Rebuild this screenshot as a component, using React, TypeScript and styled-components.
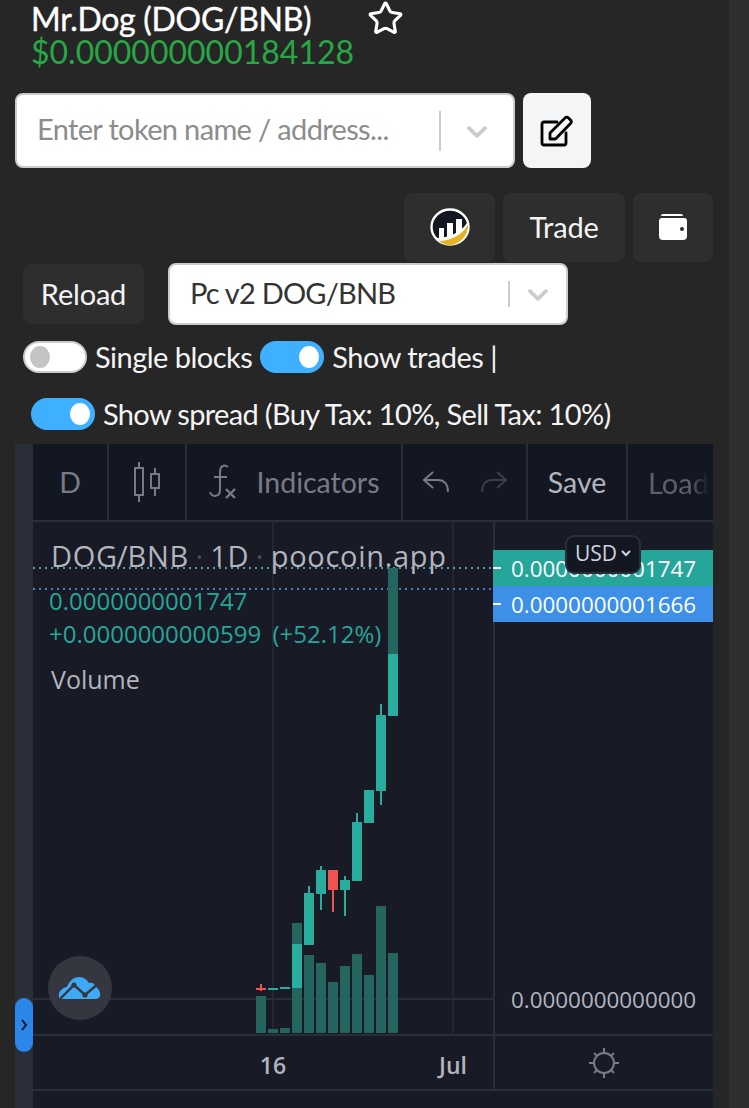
import React from 'react';
import styled, {createGlobalStyle} from 'styled-components';
import {Star} from 'lucide-react';

const GlobalStyle = createGlobalStyle`
    html, body {
        margin: 0;
        padding: 0;
        background: #262626;
    }
`;

const Page = styled.div`
    display: flex;
    width: 749px;
    height: 1108px;
    overflow: hidden;
    font-family: Lato, 'Liberation Sans', sans-serif;
    color: #f4f4f4;
`;

const Main = styled.div`
    width: 729px;
    padding: 0 16px 0 15px;
    box-sizing: border-box;
    display: flex;
    flex-direction: column;
`;

const ScrollTrack = styled.div`
    flex: 1;
    background: #2f2f2f;
`;

const Header = styled.div`
    height: 93px;
    padding-left: 16px;
    box-sizing: border-box;
`;

const TitleRow = styled.div`
    display: flex;
    align-items: center;
    height: 37px;
    gap: 56px;
`;

const Title = styled.div`
    font-size: 32px;
    line-height: 33px;
    font-weight: 400;
    -webkit-text-stroke: 0.4px #fff;
    color: #fff;
    letter-spacing: -0.3px;
`;

const Price = styled.div`
    font-size: 32px;
    line-height: 30px;
    font-weight: 400;
    color: #28a745;
`;

const SearchRow = styled.div`
    display: flex;
    gap: 8px;
    height: 75px;
`;

const SelectBox = styled.div<{$width: number; $height: number}>`
    display: flex;
    align-items: center;
    width: ${(p) => p.$width}px;
    height: ${(p) => p.$height}px;
    box-sizing: border-box;
    background: #fff;
    border: 2px solid #ccc;
    border-radius: 8px;
    padding-left: 20px;
`;

const SelectText = styled.div<{$muted?: boolean}>`
    flex: 1;
    padding-bottom: 4px;
    font-size: 29px;
    letter-spacing: ${(p) => (p.$muted ? -0.65 : -0.8)}px;
    white-space: nowrap;
    color: ${(p) => (p.$muted ? '#8c8c8c' : '#333')};
`;

const SelectDivider = styled.div<{$height: number}>`
    width: 2px;
    height: ${(p) => p.$height}px;
    background: #ccc;
`;

const Chevron = styled.svg<{$gap: number}>`
    width: 34px;
    height: 34px;
    margin: 0 ${(p) => p.$gap}px;
    fill: #ccc;
`;

const EditButton = styled.div`
    display: flex;
    align-items: center;
    justify-content: center;
    width: 68px;
    height: 75px;
    background: #f4f5f7;
    border-radius: 8px;
`;

const ActionRow = styled.div`
    display: flex;
    justify-content: flex-end;
    gap: 8px;
    height: 69px;
    margin-top: 25px;
`;

const DarkButton = styled.div<{$width: number; $height?: number}>`
    display: flex;
    align-items: center;
    justify-content: center;
    width: ${(p) => p.$width}px;
    height: ${(p) => (p.$height ? `${p.$height}px` : 'auto')};
    padding-bottom: 2px;
    box-sizing: border-box;
    background: #2e2e2f;
    border-radius: 8px;
    font-size: 29px;
    letter-spacing: -0.2px;
    color: #f4f4f4;
`;

const ReloadRow = styled.div`
    display: flex;
    align-items: center;
    gap: 24px;
    height: 62px;
    margin-top: 1px;
    padding-left: 8px;
`;

const ToggleRow = styled.div<{$inset: number; $top: number}>`
    display: flex;
    align-items: center;
    gap: 8px;
    height: 33px;
    margin-top: ${(p) => p.$top}px;
    padding-left: ${(p) => p.$inset}px;
`;

const ToggleTrack = styled.div<{$on?: boolean}>`
    display: flex;
    align-items: center;
    justify-content: ${(p) => (p.$on ? 'flex-end' : 'flex-start')};
    width: 64px;
    height: 32px;
    padding: 0 5px;
    box-sizing: border-box;
    border-radius: 16px;
    background: ${(p) => (p.$on ? '#3fb0ff' : '#fff')};
    border: ${(p) => (p.$on ? 'none' : '2px solid #ccc')};
`;

const ToggleKnob = styled.div<{$on?: boolean}>`
    width: 20px;
    height: 22px;
    border-radius: 50%;
    background: ${(p) => (p.$on ? '#fff' : '#c4c4c4')};
`;

const ToggleLabel = styled.div<{$tracking: number}>`
    font-size: 29px;
    letter-spacing: ${(p) => p.$tracking}px;
    white-space: nowrap;
    color: #f4f4f4;
`;

const ChartFrame = styled.div`
    display: flex;
    flex: 1;
    margin-top: 14px;
    background: #131722;
`;

const SideStrip = styled.div`
    position: relative;
    width: 18px;
    background: #2a2e39;
`;

const SideToggle = styled.div`
    position: absolute;
    top: 554px;
    left: 0;
    display: flex;
    align-items: center;
    justify-content: center;
    width: 18px;
    height: 54px;
    border-radius: 9px;
    background: #2a86e8;
`;

const ChartColumn = styled.div`
    flex: 1;
    min-width: 0;
    display: flex;
    flex-direction: column;
`;

const Toolbar = styled.div`
    display: flex;
    height: 78px;
    box-sizing: border-box;
    flex-shrink: 0;
    overflow: hidden;
    border-bottom: 2px solid #2a2e39;
    background: #131722;
`;

const ToolGroup = styled.div<{$width: number; $gap?: number}>`
    display: flex;
    align-items: center;
    justify-content: center;
    gap: ${(p) => p.$gap ?? 20}px;
    flex-shrink: 0;
    width: ${(p) => p.$width}px;
    box-sizing: border-box;
    border-right: 2px solid #2a2e39;
    font-size: 28.5px;
    color: #787b86;
`;

const ToolSave = styled.span`
    color: #b2b5be;
`;

const LoadText = styled.span`
    margin-left: 20px;
    align-self: center;
    white-space: nowrap;
    font-size: 29px;
    color: #5d606b;
    -webkit-mask-image: linear-gradient(to right, #000 70%, transparent 100%);
    mask-image: linear-gradient(to right, #000 70%, transparent 100%);
`;

const PlotArea = styled.div`
    display: flex;
    height: 512px;
    flex-shrink: 0;
    background: #181a25;
`;

const Plot = styled.div`
    position: relative;
    width: 460px;
`;

const ChartCanvas = styled.svg`
    display: block;
`;

const Legend = styled.div`
    position: absolute;
    top: 13px;
    left: 18px;
    font-family: 'Open Sans', sans-serif;
    white-space: nowrap;
`;

const LegendTitle = styled.div`
    font-size: 29px;
    line-height: 42px;
    letter-spacing: 0.7px;
    word-spacing: -9px;
    color: #b2b5be;
`;

const LegendDot = styled.span`
    margin: 0 6.5px;
    color: #4c4f5c;
`;

const LegendValue = styled.div<{$top?: number}>`
    margin-left: -2px;
    margin-top: ${(p) => p.$top ?? 0}px;
    font-size: 24px;
    line-height: 33px;
    word-spacing: 5px;
    color: #26a69a;
`;

const LegendVolume = styled.div`
    margin-top: 12px;
    font-size: 25px;
    line-height: 34px;
    color: #b2b5be;
`;

const PriceAxis = styled.div`
    position: relative;
    flex: 1;
    border-left: 2px solid #2a2e39;
`;

const PriceTag = styled.div<{$bg: string; $top: number}>`
    position: absolute;
    left: -2px;
    right: 0;
    top: ${(p) => p.$top}px;
    height: 36px;
    display: flex;
    align-items: center;
    padding-left: 18px;
    font-family: 'Open Sans', sans-serif;
    font-size: 22.4px;
    color: #fff;
    background: ${(p) => p.$bg};

    &::before {
        content: '';
        position: absolute;
        left: 0;
        top: 17px;
        width: 8px;
        height: 2px;
        background: #fff;
    }
`;

const UsdBadge = styled.div`
    position: absolute;
    top: 13px;
    left: 70px;
    width: 76px;
    height: 39px;
    box-sizing: border-box;
    padding-bottom: 3px;
    display: flex;
    align-items: center;
    justify-content: center;
    gap: 4px;
    border: 2px solid #2a2e39;
    border-radius: 9px;
    background: #131722;
    font-family: 'Open Sans', sans-serif;
    font-size: 21px;
    color: #d1d4dc;
`;

const ZeroLabel = styled.div`
    position: absolute;
    top: 462px;
    left: 16px;
    font-family: 'Open Sans', sans-serif;
    font-size: 22.4px;
    line-height: 32px;
    color: #b2b5be;
    white-space: nowrap;
`;

const TimeRow = styled.div`
    display: flex;
    height: 57px;
    box-sizing: border-box;
    flex-shrink: 0;
    border-top: 2px solid #2a2e39;
    border-bottom: 2px solid #2a2e39;
    background: #181a25;
`;

const TimeAxis = styled.div`
    position: relative;
    width: 460px;
`;

const TimeLabel = styled.div<{$x: number}>`
    position: absolute;
    top: 13px;
    left: ${(p) => p.$x}px;
    transform: translateX(-50%);
    font-family: 'Open Sans', sans-serif;
    font-size: 23px;
    font-weight: 600;
    color: #b2b5be;
`;

const SunCell = styled.div`
    flex: 1;
    display: flex;
    align-items: center;
    justify-content: center;
    border-left: 2px solid #2a2e39;
`;

const BottomBand = styled.div`
    flex: 1;
    background: #181a25;
`;

const LogoBubble = styled.div`
    position: absolute;
    top: 434px;
    left: 15px;
    width: 64px;
    height: 64px;
    border-radius: 50%;
    background: #343640;
    display: flex;
    align-items: center;
    justify-content: center;
`;

// x is the left edge in plot coordinates, top/bottom are body extents, wick is optional
const candles = [
    {x: 223, top: 466, bottom: 468, wickTop: 462, wickBottom: 469, red: true},
    {x: 235, top: 466, bottom: 468},
    {x: 247, top: 465, bottom: 467},
    {x: 259, top: 422, bottom: 466},
    {x: 271, top: 371, bottom: 423, wickTop: 364},
    {x: 283, top: 348, bottom: 372, wickTop: 344, wickBottom: 388},
    {x: 295, top: 348, bottom: 368, wickBottom: 390, red: true},
    {x: 307, top: 358, bottom: 368, wickTop: 354, wickBottom: 394},
    {x: 319, top: 300, bottom: 359, wickTop: 291},
    {x: 331, top: 268, bottom: 301},
    {x: 343, top: 193, bottom: 269, wickTop: 182, wickBottom: 283},
    {x: 355, top: 132, bottom: 194},
];

const volumes = [
    {x: 223, top: 474},
    {x: 235, top: 507},
    {x: 247, top: 506},
    {x: 259, top: 401},
    {x: 271, top: 433},
    {x: 283, top: 441},
    {x: 295, top: 460},
    {x: 307, top: 444},
    {x: 319, top: 432},
    {x: 331, top: 453},
    {x: 343, top: 384},
    {x: 355, top: 431},
];

const CHEVRON = 'M4.516 7.548c0.436-0.446 1.043-0.481 1.576 0l3.908 3.747 3.908-3.747c0.533-0.481 1.141-0.446 1.574 0 0.436 0.445 0.408 1.197 0 1.615-0.406 0.418-4.695 4.502-4.695 4.502-0.217 0.223-0.502 0.335-0.787 0.335s-0.57-0.112-0.789-0.335c0 0-4.287-4.084-4.695-4.502s-0.436-1.17 0-1.615z';

const CandleChart = () => (
    <ChartCanvas
        width={460}
        height={512}
    >
        <line x1={240} x2={240} y1={0} y2={512} stroke='#232632' strokeWidth={2}/>
        <line x1={420} x2={420} y1={0} y2={512} stroke='#232632' strokeWidth={2}/>
        <line x1={0} x2={460} y1={477} y2={477} stroke='#2a2d38' strokeWidth={2}/>
        <line x1={0} x2={460} y1={46} y2={46} stroke='#5f93a8' strokeWidth={2} strokeDasharray='2 4'/>
        <line x1={0} x2={460} y1={67} y2={67} stroke='#4d7fc0' strokeWidth={2} strokeDasharray='2 4'/>
        {volumes.map((v) => (
            <rect key={v.x} x={v.x} y={v.top} width={10} height={511 - v.top} fill='#24665f'/>
        ))}
        <rect x={355} y={46} width={10} height={86} fill='#24665f'/>
        {candles.map((c) => {
            const color = c.red ? '#ef5350' : '#28ad9e';
            return (
                <g key={c.x}>
                    {c.wickTop !== undefined && <rect x={c.x + 4} y={c.wickTop} width={2} height={c.top - c.wickTop} fill={color}/>}
                    {c.wickBottom !== undefined && <rect x={c.x + 4} y={c.bottom} width={2} height={c.wickBottom - c.bottom} fill={color}/>}
                    <rect x={c.x} y={c.top} width={10} height={c.bottom - c.top} fill={color}/>
                </g>
            );
        })}
    </ChartCanvas>
);

const EditIcon = () => (
    <svg width='34' height='32' viewBox='0 0 34 32' fill='none' stroke='#000' strokeWidth='2.8' strokeLinejoin='round' strokeLinecap='round'>
        <path d='M17 7H4a2 2 0 0 0-2 2v19a2 2 0 0 0 2 2h20a2 2 0 0 0 2-2V18'/>
        <path d='M10 18L25 3a2.5 2.5 0 0 1 3.5 0l2 2a2.5 2.5 0 0 1 0 3.5L15.5 24H10z'/>
    </svg>
);

const TokenLogo = () => (
    <svg width='40' height='38' viewBox='0 0 40 38'>
        <ellipse cx='20' cy='19' rx='18.5' ry='17.5' fill='#131722' stroke='#fff' strokeWidth='2.4'/>
        <rect x='9' y='20' width='5' height='12' fill='#fff'/>
        <rect x='17' y='15' width='6' height='15' fill='#fff'/>
        <rect x='26' y='11' width='6' height='17' fill='#fff'/>
        <path d='M6 30C16 30 30 26 37 15 38 26 28 36 20 36 13 36 9 33 6 30z' fill='#fff'/>
        <path d='M9 33C20 33 32 27 38 17 38 28 29 37 20 37 15 37 11 35 9 33z' fill='#e6b422'/>
    </svg>
);

const WalletIcon = () => (
    <svg width='30' height='28' viewBox='0 0 30 28'>
        <path d='M5 1h18a2 2 0 0 1 2 2H3a2 2 0 0 1 2-2z' fill='#fff'/>
        <path d='M4 5h22a3 3 0 0 1 3 3v15a4 4 0 0 1-4 4H5a4 4 0 0 1-4-4V7a3 3 0 0 1 3-2z' fill='#fff'/>
        <circle cx='24' cy='16' r='2' fill='#2e2e2f'/>
    </svg>
);

const CandleIcon = () => (
    <svg width='26' height='40' viewBox='0 0 26 40' fill='none' stroke='#787b86' strokeWidth='2'>
        <rect x='1' y='6' width='8' height='27'/>
        <path d='M5 0v6M5 33v7'/>
        <rect x='17' y='12' width='8' height='14'/>
        <path d='M21 6v6M21 26v8'/>
    </svg>
);

const FxIcon = () => (
    <svg width='28' height='36' viewBox='0 0 28 36' fill='none' stroke='#787b86' strokeWidth='2'>
        <path d='M19 3C15 0 11 2 11 8V26C11 33 3 34 1 28M5 13H18'/>
        <path d='M17 25l9 9M26 25l-9 9' strokeWidth='2.4'/>
    </svg>
);

const TurnArrow = ({flip, color}: {flip?: boolean; color: string}) => (
    <svg
        width='28'
        height='24'
        viewBox='0 0 28 24'
        fill='none'
        stroke={color}
        strokeWidth='2'
        style={flip ? {transform: 'scaleX(-1)'} : undefined}
    >
        <path d='M11 2L2 10l9 8M2 10h14c6 0 10 4 10 12'/>
    </svg>
);

const SunIcon = () => (
    <svg width='32' height='32' viewBox='0 0 32 32' fill='none' stroke='#787b86' strokeWidth='2'>
        <circle cx='16' cy='16' r='10'/>
        <path d='M16 1v5M16 26v5M1 16h5M26 16h5M6 6l3 3M23 23l3 3M26 6l-3 3M6 26l3-3'/>
    </svg>
);

const CloudLogo = () => (
    <svg width='44' height='24' viewBox='0 0 44 24'>
        <path d='M3 23C0 23 0 16 3 14 5 12 7 11 9 11 11 5 16 1 21 1 26 1 29 4 31 7 34 6 37 8 38 11 41 13 43 17 42 20 41 22 40 23 38 23z' fill='#3fa9f5'/>
        <path d='M2 23L16 9l11 10L41 7' fill='none' stroke='#343640' strokeWidth='2.4'/>
        <circle cx='16' cy='9' r='2.6' fill='#343640'/>
        <circle cx='27' cy='19' r='2.6' fill='#343640'/>
    </svg>
);

const App = () => (
    <Page>
        <GlobalStyle/>
        <Main>
            <Header>
                <TitleRow>
                    <Title>{'Mr.Dog (DOG/BNB)'}</Title>
                    <Star size={37} strokeWidth={2} color='#fff'/>
                </TitleRow>
                <Price>{'$0.000000000184128'}</Price>
            </Header>
            <SearchRow>
                <SelectBox $width={500} $height={75}>
                    <SelectText $muted={true}>{'Enter token name / address...'}</SelectText>
                    <SelectDivider $height={40}/>
                    <Chevron $gap={19} viewBox='0 0 20 20'><path d={CHEVRON}/></Chevron>
                </SelectBox>
                <EditButton><EditIcon/></EditButton>
            </SearchRow>
            <ActionRow>
                <DarkButton $width={91}><TokenLogo/></DarkButton>
                <DarkButton $width={122}>{'Trade'}</DarkButton>
                <DarkButton $width={80}><WalletIcon/></DarkButton>
            </ActionRow>
            <ReloadRow>
                <DarkButton $width={121} $height={60}>{'Reload'}</DarkButton>
                <SelectBox $width={400} $height={62}>
                    <SelectText>{'Pc v2 DOG/BNB'}</SelectText>
                    <SelectDivider $height={26}/>
                    <Chevron $gap={11} viewBox='0 0 20 20'><path d={CHEVRON}/></Chevron>
                </SelectBox>
            </ReloadRow>
            <ToggleRow $inset={8} $top={15}>
                <ToggleTrack><ToggleKnob/></ToggleTrack>
                <ToggleLabel $tracking={-0.52}>{'Single blocks'}</ToggleLabel>
                <ToggleTrack $on={true}><ToggleKnob $on={true}/></ToggleTrack>
                <ToggleLabel $tracking={-0.52}>{'Show trades |'}</ToggleLabel>
            </ToggleRow>
            <ToggleRow $inset={16} $top={24}>
                <ToggleTrack $on={true}><ToggleKnob $on={true}/></ToggleTrack>
                <ToggleLabel $tracking={-0.65}>{'Show spread (Buy Tax: 10%, Sell Tax: 10%)'}</ToggleLabel>
            </ToggleRow>
            <ChartFrame>
                <SideStrip>
                    <SideToggle>
                        <svg width='8' height='14' viewBox='0 0 8 14' fill='none' stroke='#131722' strokeWidth='2'>
                            <path d='M2 2l4 5-4 5'/>
                        </svg>
                    </SideToggle>
                </SideStrip>
                <ChartColumn>
                    <Toolbar>
                        <ToolGroup $width={76}>{'D'}</ToolGroup>
                        <ToolGroup $width={78}><CandleIcon/></ToolGroup>
                        <ToolGroup $width={216}><FxIcon/>{'Indicators'}</ToolGroup>
                        <ToolGroup $width={125} $gap={30}>
                            <TurnArrow color='#787b86'/>
                            <TurnArrow flip={true} color='#3c3f4b'/>
                        </ToolGroup>
                        <ToolGroup $width={100}><ToolSave>{'Save'}</ToolSave></ToolGroup>
                        <LoadText>{'Load'}</LoadText>
                    </Toolbar>
                    <PlotArea>
                        <Plot>
                            <CandleChart/>
                            <Legend>
                                <LegendTitle>
                                    {'DOG / BNB'}<LegendDot>{'·'}</LegendDot>{'1D'}<LegendDot>{'·'}</LegendDot>{'poocoin.app'}
                                </LegendTitle>
                                <LegendValue $top={7}>{'0.0000000001747'}</LegendValue>
                                <LegendValue>{'+0.0000000000599 (+52.12%)'}</LegendValue>
                                <LegendVolume>{'Volume'}</LegendVolume>
                            </Legend>
                            <LogoBubble><CloudLogo/></LogoBubble>
                        </Plot>
                        <PriceAxis>
                            <PriceTag $bg='#26a69a' $top={28}>{'0.0000000001747'}</PriceTag>
                            <PriceTag $bg='#3d8fe8' $top={64}>{'0.0000000001666'}</PriceTag>
                            <UsdBadge>
                                {'USD'}
                                <svg width='10' height='7' viewBox='0 0 10 7' fill='none' stroke='#d1d4dc' strokeWidth='2'>
                                    <path d='M1 1l4 4 4-4'/>
                                </svg>
                            </UsdBadge>
                            <ZeroLabel>{'0.0000000000000'}</ZeroLabel>
                        </PriceAxis>
                    </PlotArea>
                    <TimeRow>
                        <TimeAxis>
                            <TimeLabel $x={240}>{'16'}</TimeLabel>
                            <TimeLabel $x={420}>{'Jul'}</TimeLabel>
                        </TimeAxis>
                        <SunCell><SunIcon/></SunCell>
                    </TimeRow>
                    <BottomBand/>
                </ChartColumn>
            </ChartFrame>
        </Main>
        <ScrollTrack/>
    </Page>
);

export default App;
